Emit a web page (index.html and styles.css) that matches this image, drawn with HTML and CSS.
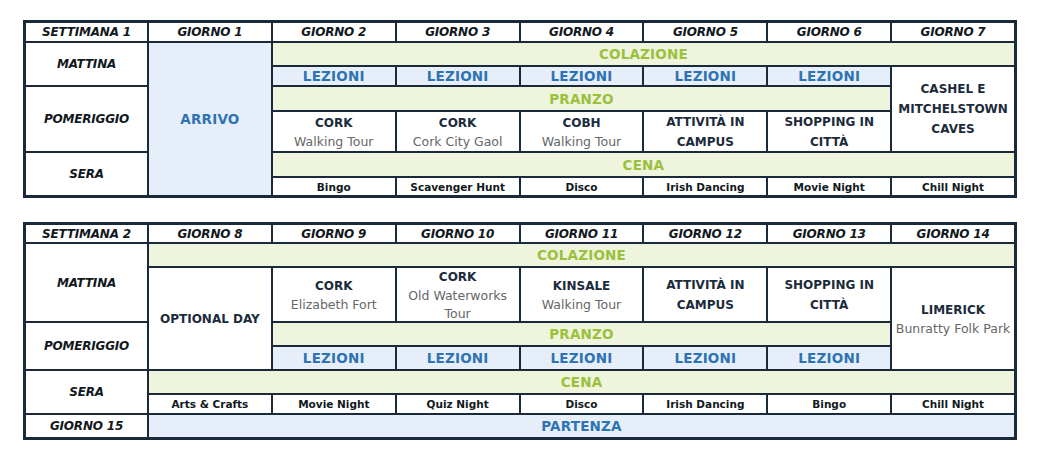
FILE: index.html
```html
<!DOCTYPE html>
<html lang="it">
<head>
<meta charset="utf-8">
<title>Programma</title>
<link rel="stylesheet" href="styles.css">
</head>
<body>
<div class="page">
  <div class="sched w1">
    <div class="c hd">SETTIMANA 1</div>
    <div class="c hd">GIORNO 1</div>
    <div class="c hd">GIORNO 2</div>
    <div class="c hd">GIORNO 3</div>
    <div class="c hd">GIORNO 4</div>
    <div class="c hd">GIORNO 5</div>
    <div class="c hd">GIORNO 6</div>
    <div class="c hd">GIORNO 7</div>

    <div class="c hd r2">MATTINA</div>
    <div class="c blue big r6">ARRIVO</div>
    <div class="c green meal s6">COLAZIONE</div>

    <div class="c blue big">LEZIONI</div>
    <div class="c blue big">LEZIONI</div>
    <div class="c blue big">LEZIONI</div>
    <div class="c blue big">LEZIONI</div>
    <div class="c blue big">LEZIONI</div>
    <div class="c act r3"><b>CASHEL E<br>MITCHELSTOWN<br>CAVES</b></div>

    <div class="c hd r2">POMERIGGIO</div>
    <div class="c green meal s5">PRANZO</div>

    <div class="c act"><b>CORK</b><span>Walking Tour</span></div>
    <div class="c act"><b>CORK</b><span>Cork City Gaol</span></div>
    <div class="c act"><b>COBH</b><span>Walking Tour</span></div>
    <div class="c act"><b>ATTIVITÀ IN<br>CAMPUS</b></div>
    <div class="c act"><b>SHOPPING IN<br>CITTÀ</b></div>

    <div class="c hd r2">SERA</div>
    <div class="c green meal s6">CENA</div>

    <div class="c eve">Bingo</div>
    <div class="c eve">Scavenger Hunt</div>
    <div class="c eve">Disco</div>
    <div class="c eve">Irish Dancing</div>
    <div class="c eve">Movie Night</div>
    <div class="c eve">Chill Night</div>
  </div>

  <div class="sched w2">
    <div class="c hd">SETTIMANA 2</div>
    <div class="c hd">GIORNO 8</div>
    <div class="c hd">GIORNO 9</div>
    <div class="c hd">GIORNO 10</div>
    <div class="c hd">GIORNO 11</div>
    <div class="c hd">GIORNO 12</div>
    <div class="c hd">GIORNO 13</div>
    <div class="c hd">GIORNO 14</div>

    <div class="c hd r2">MATTINA</div>
    <div class="c green meal s7">COLAZIONE</div>

    <div class="c act r3"><b>OPTIONAL DAY</b></div>
    <div class="c act"><b>CORK</b><span>Elizabeth Fort</span></div>
    <div class="c act"><b>CORK</b><span>Old Waterworks<br>Tour</span></div>
    <div class="c act"><b>KINSALE</b><span>Walking Tour</span></div>
    <div class="c act"><b>ATTIVITÀ IN<br>CAMPUS</b></div>
    <div class="c act"><b>SHOPPING IN<br>CITTÀ</b></div>
    <div class="c act r3"><b>LIMERICK</b><span>Bunratty Folk Park</span></div>

    <div class="c hd r2">POMERIGGIO</div>
    <div class="c green meal s5">PRANZO</div>

    <div class="c blue big">LEZIONI</div>
    <div class="c blue big">LEZIONI</div>
    <div class="c blue big">LEZIONI</div>
    <div class="c blue big">LEZIONI</div>
    <div class="c blue big">LEZIONI</div>

    <div class="c hd r2">SERA</div>
    <div class="c green meal s7">CENA</div>

    <div class="c eve">Arts &amp; Crafts</div>
    <div class="c eve">Movie Night</div>
    <div class="c eve">Quiz Night</div>
    <div class="c eve">Disco</div>
    <div class="c eve">Irish Dancing</div>
    <div class="c eve">Bingo</div>
    <div class="c eve">Chill Night</div>

    <div class="c hd">GIORNO 15</div>
    <div class="c blue big s7">PARTENZA</div>
  </div>
</div>
</body>
</html>
```

FILE: styles.css
```css
* { box-sizing: border-box; }
html, body { margin: 0; padding: 0; background: #ffffff; }
body {
  font-family: "DejaVu Sans", "Noto Sans", sans-serif;
  color: #1c2b3c;
}
.page {
  padding: 20px 0 0 23px;
  display: flex;
  flex-direction: column;
  gap: 24px;
}
.sched {
  width: 994px;
  display: grid;
  grid-template-columns: 121px repeat(7, 1fr);
  gap: 2px;
  background: #1b2a3a;
  border: 3px solid #1b2a3a;
}
.w1 { grid-template-rows: 18px 22px 18px 23px 39px 23px 17px; }
.w2 { grid-template-rows: 17px 22px 53px 22px 22px 22px 18px 22px; }

.c {
  background: #ffffff;
  display: flex;
  flex-direction: column;
  align-items: center;
  justify-content: center;
  text-align: center;
  overflow: hidden;
}
.r2 { grid-row: span 2; }
.r3 { grid-row: span 3; }
.r6 { grid-row: span 6; }
.s5 { grid-column: span 5; }
.s6 { grid-column: span 6; }
.s7 { grid-column: span 7; }

.hd {
  font-weight: bold;
  font-style: italic;
  font-size: 12px;
  color: #111820;
  letter-spacing: -0.2px;
}
.green { background: #eff4dd; }
.blue { background: #e6eff9; }
.meal {
  color: #9ac13c;
  font-weight: bold;
  font-size: 13.5px;
  letter-spacing: 0.2px;
}
.big {
  color: #2e73b4;
  font-weight: bold;
  font-size: 13.5px;
  letter-spacing: 0.2px;
}
.act { line-height: 20px; }
.act b {
  font-size: 12px;
  font-weight: bold;
  color: #1c2b3c;
}
.act span {
  font-size: 12.5px;
  color: #666666;
  line-height: 18px;
}
.eve {
  font-size: 10.5px;
  font-weight: bold;
  color: #111820;
}
```
